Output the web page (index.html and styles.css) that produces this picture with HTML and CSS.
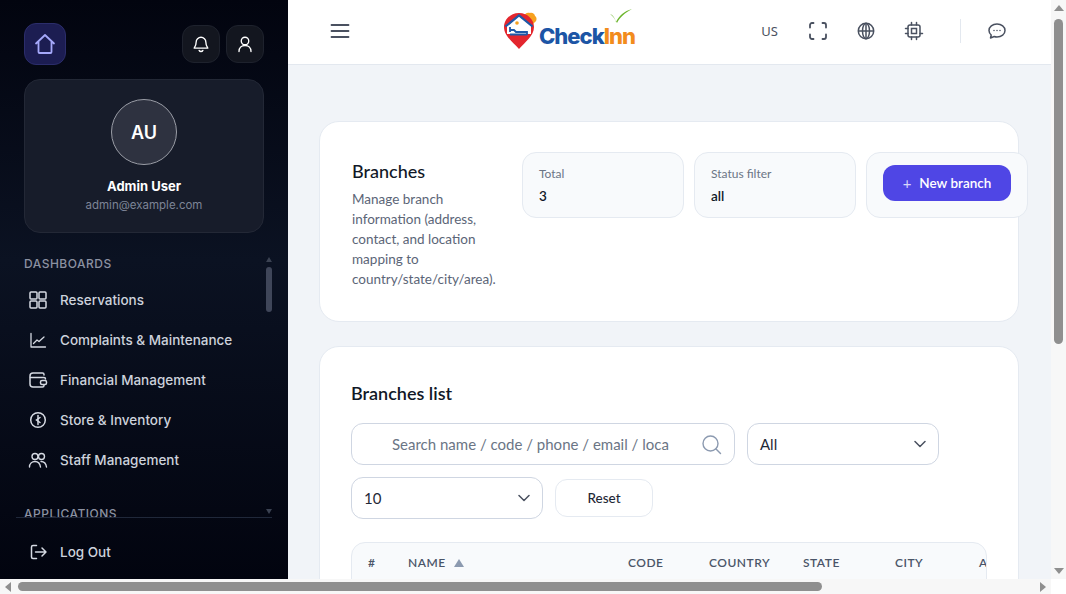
FILE: index.html
```html
<!doctype html>
<html lang="en">
<head>
    <meta charset="UTF-8">
    <title>Branches</title>
    <link rel="stylesheet" href="styles.css">
</head>
<body>
<div class="window">
    <div class="app">
        <aside class="sidebar">
            <div class="side-top">
                <a class="home-btn">
                    <svg width="24" height="24" viewBox="0 0 24 24" fill="none" stroke="#a5a8fa" stroke-width="1.8" stroke-linejoin="round" stroke-linecap="round"><path d="M3 11.5 12 3l9 8.5M5.5 9.5V20a1 1 0 0 0 1 1h11a1 1 0 0 0 1-1V9.5"/></svg>
                </a>
                <div class="side-actions">
                    <a class="icon-btn">
                        <svg width="18" height="18" viewBox="0 0 24 24" fill="none" stroke="#fff" stroke-width="1.8" stroke-linecap="round" stroke-linejoin="round"><path d="M12 3a6.5 6.5 0 0 0-6.5 6.5c0 5-2.5 7-2.5 8h18c0-1-2.500-3-2.500-8A6.500 6.500 0 0 0 12 3Z"/><path d="M9.500 20.500a2.800 2.800 0 0 0 5 0"/></svg>
                    </a>
                    <a class="icon-btn">
                        <svg width="18" height="18" viewBox="0 0 24 24" fill="none" stroke="#fff" stroke-width="1.8" stroke-linecap="round"><circle cx="12" cy="8" r="5"/><path d="M4 22c0-5 3.500-8 8-8s8 3 8 8"/></svg>
                    </a>
                </div>
            </div>
            <div class="profile">
                <div class="avatar">AU</div>
                <div class="profile-name">Admin User</div>
                <div class="profile-mail">admin@example.com</div>
            </div>
            <div class="side-scroll">
                <nav class="side-nav">
                    <div class="nav-title">DASHBOARDS</div>
                    <a class="nav-item">
                        <svg width="20" height="20" viewBox="0 0 20 20" fill="none" stroke="#d5d9e2" stroke-width="1.500"><rect x="2" y="2" width="7" height="7" rx="1"/><rect x="11" y="2" width="7" height="7" rx="1"/><rect x="2" y="11" width="7" height="7" rx="1"/><rect x="11" y="11" width="7" height="7" rx="1"/></svg>
                        Reservations
                    </a>
                    <a class="nav-item">
                        <svg width="20" height="20" viewBox="0 0 20 20" fill="none" stroke="#d5d9e2" stroke-width="1.300" stroke-linecap="round" stroke-linejoin="round"><path d="M3 3.500V17h14.500"/><path d="M5.500 13.500 9 10l2 1.500 5-4.500"/></svg>
                        Complaints &amp; Maintenance
                    </a>
                    <a class="nav-item">
                        <svg width="20" height="20" viewBox="0 0 20 20" fill="none" stroke="#d5d9e2" stroke-width="1.500" stroke-linecap="round" stroke-linejoin="round"><path d="M16 5V4.500A1.500 1.500 0 0 0 14.500 3H5a3 3 0 0 0-3 3v8a3 3 0 0 0 3 3h9.500a1.500 1.500 0 0 0 1.500-1.500V15"/><path d="M2.500 7.500H16a1.500 1.500 0 0 1 1.500 1.500"/><rect x="12.500" y="10.500" width="6" height="4" rx="1.500"/></svg>
                        Financial Management
                    </a>
                    <a class="nav-item">
                        <svg width="20" height="20" viewBox="0 0 20 20" fill="none" stroke="#d5d9e2" stroke-width="1.500" stroke-linecap="round"><circle cx="10" cy="10" r="7.300"/><path d="M10 5.500v9"/><path d="M12 7.500 8.500 10l3.500 2.500"/></svg>
                        Store &amp; Inventory
                    </a>
                    <a class="nav-item">
                        <svg width="20" height="20" viewBox="0 0 20 20" fill="none" stroke="#d5d9e2" stroke-width="1.400" stroke-linecap="round"><circle cx="7" cy="6.500" r="3"/><circle cx="13.500" cy="6.500" r="3"/><path d="M1.500 17c0-3.500 2.500-5.500 5.500-5.500s5 2 5.500 5.500"/><path d="M13 11.500c3 0 5 2 5.500 5.500"/></svg>
                        Staff Management
                    </a>
                    <div class="nav-title nav-title-next">APPLICATIONS</div>
                </nav>
                <div class="mini-bar">
                    <span class="mini-up"></span>
                    <span class="mini-thumb"></span>
                    <span class="mini-down"></span>
                </div>
            </div>
            <div class="side-bottom">
                <a class="nav-item">
                    <svg width="20" height="20" viewBox="0 0 20 20" fill="none" stroke="#d5d9e2" stroke-width="1.500" stroke-linecap="round" stroke-linejoin="round"><path d="M8.500 3.500H5A1.500 1.500 0 0 0 3.500 5v10A1.500 1.500 0 0 0 5 16.500h3.500"/><path d="M7.500 10H18M14 6l4 4-4 4"/></svg>
                    Log Out
                </a>
            </div>
        </aside>

        <div class="main">
            <header class="topbar">
                <a class="burger">
                    <svg width="20" height="16" viewBox="0 0 20 16" fill="none" stroke="#4a5160" stroke-width="1.800" stroke-linecap="round"><path d="M1.500 2h17M1.500 8h17M1.500 14h17"/></svg>
                </a>
                <div class="logo">
                    <svg class="logo-mark" width="36" height="40" viewBox="0 0 36 40">
                        <path d="M22 6c0-3 3-5 6-4 2-1 5 1 5 3 2 1 2 5 0 6l-3 3-8-5Z" fill="#f7a11f"/>
                        <path d="M17 2C8 2 2 9 2 16c0 9 9 15 15 22 6-7 15-13 15-22C32 9 26 2 17 2Z" fill="#e3262e"/>
                        <path d="M5 15 17 5l12 10v8H5Z" fill="#fff"/>
                        <path d="M3.500 15.500 17 4.500l13.500 11" fill="none" stroke="#1e5aa8" stroke-width="2.200"/>
                        <path d="M8 21v-5M8 19h4l2 2h11v3M8 23.500h17" fill="none" stroke="#1e5aa8" stroke-width="1.800"/>
                        <circle cx="15" cy="12" r="1.800" fill="#f7a11f"/>
                    </svg>
                    <span class="logo-check">Check</span><span class="logo-inn">Inn</span>
                    <svg class="logo-tick" width="24" height="15" viewBox="0 0 24 15"><path d="M1 6c3 1 5 4 6 8C10 8 15 3 23 1 16 5 11 9 8 15 6 11 4 8 1 6Z" fill="#6cb52d"/></svg>
                </div>
                <div class="top-tools">
                    <span class="lang">US</span>
                    <a class="tool">
                        <svg width="20" height="20" viewBox="0 0 20 20" fill="none" stroke="#4a5160" stroke-width="1.800" stroke-linecap="round"><path d="M2 6.500V4a2 2 0 0 1 2-2h1.500M14.500 2H16a2 2 0 0 1 2 2v2.500M18 13.500V16a2 2 0 0 1-2 2h-1.500M5.500 18H4a2 2 0 0 1-2-2v-2.500"/></svg>
                    </a>
                    <a class="tool">
                        <svg width="20" height="20" viewBox="0 0 20 20" fill="none" stroke="#4a5160" stroke-width="1.500"><circle cx="10" cy="10" r="7.700"/><ellipse cx="10" cy="10" rx="3.500" ry="7.700"/><path d="M2.300 10h15.400M10 2.300v15.400"/></svg>
                    </a>
                    <a class="tool">
                        <svg width="20" height="20" viewBox="0 0 20 20" fill="none" stroke="#4a5160" stroke-width="1.500" stroke-linecap="round"><rect x="4" y="4" width="12" height="12" rx="2"/><rect x="7.500" y="7.500" width="5" height="5"/><path d="M7.500 1.500V4M12.500 1.500V4M7.500 16v2.500M12.500 16v2.500M1.500 7.500H4M1.500 12.500H4M16 12.500h2.500"/></svg>
                    </a>
                    <span class="top-divider"></span>
                    <a class="tool">
                        <svg width="20" height="20" viewBox="0 0 20 20" fill="none" stroke="#4a5160" stroke-width="1.500" stroke-linecap="round" stroke-linejoin="round"><path d="M10 3c-4.500 0-8 2.800-8 6.500 0 1.800.8 3.300 2.200 4.500L3.500 17l3.700-1.500c.9.300 1.800.5 2.800.5 4.500 0 8-2.800 8-6.500S14.500 3 10 3Z"/><path d="M7 9.500h0M10 9.500h0M13 9.500h0"/></svg>
                    </a>
                </div>
            </header>

            <main class="page">
                <section class="card head-card">
                    <div class="head-text">
                        <h1>Branches</h1>
                        <p>Manage branch information (address, contact, and location mapping to country/state/city/area).</p>
                    </div>
                    <div class="stat">
                        <span class="stat-label">Total</span>
                        <span class="stat-value">3</span>
                    </div>
                    <div class="stat">
                        <span class="stat-label">Status filter</span>
                        <span class="stat-value">all</span>
                    </div>
                    <div class="stat stat-action">
                        <a class="btn-primary"><span class="plus">+</span> New branch</a>
                    </div>
                </section>

                <section class="card list-card">
                    <h2>Branches list</h2>
                    <div class="filters">
                        <div class="field search">
                            <span class="search-text">Search name / code / phone / email / loca</span>
                            <svg width="21" height="21" viewBox="0 0 21 21" fill="none" stroke="#8c9ab0" stroke-width="1.400" stroke-linecap="round"><circle cx="9.500" cy="9.500" r="7.500"/><path d="m15 15 4.500 4.500"/></svg>
                        </div>
                        <div class="field status-select">
                            All
                            <svg width="12" height="8" viewBox="0 0 12 8" fill="none" stroke="#4a5160" stroke-width="1.500" stroke-linecap="round" stroke-linejoin="round"><path d="m1 1.500 5 5 5-5"/></svg>
                        </div>
                        <div class="field size-select">
                            10
                            <svg width="12" height="8" viewBox="0 0 12 8" fill="none" stroke="#4a5160" stroke-width="1.500" stroke-linecap="round" stroke-linejoin="round"><path d="m1 1.500 5 5 5-5"/></svg>
                        </div>
                        <a class="btn-reset">Reset</a>
                    </div>
                    <div class="table-wrap">
                        <div class="table-head">
                            <span class="col-num">#</span>
                            <span class="col-name">NAME <i class="sort"></i></span>
                            <span class="col-code">CODE</span>
                            <span class="col-country">COUNTRY</span>
                            <span class="col-state">STATE</span>
                            <span class="col-city">CITY</span>
                            <span class="col-area">AREA</span>
                        </div>
                    </div>
                </section>
            </main>
        </div>
    </div>

    <div class="vbar">
        <span class="arrow-up"></span>
        <span class="vthumb"></span>
        <span class="arrow-down"></span>
    </div>
    <div class="hbar">
        <span class="arrow-left"></span>
        <span class="hthumb"></span>
        <span class="arrow-right"></span>
    </div>
    <div class="corner"></div>
</div>
</body>
</html>
```

FILE: styles.css
```css
* {
    padding: 0;
    margin: 0;
    box-sizing: border-box;
}

html, body {
    height: 100%;
    overflow: hidden;
}

body {
    font-family: Inter, "Noto Sans", sans-serif;
    color: #111827;
}

.window {
    display: grid;
    grid-template-columns: 1fr 15px;
    grid-template-rows: 1fr 15px;
    width: 1066px;
    height: 594px;
}

.app {
    display: flex;
    min-width: 0;
    min-height: 0;
    overflow: hidden;
}

/* sidebar */
.sidebar {
    display: flex;
    flex-direction: column;
    flex: 0 0 288px;
    padding: 23px 24px 0;
    background: linear-gradient(180deg, #02040f 0%, #0b1222 45%, #02040f 100%);
    color: #d5d9e2;
}

.side-top {
    display: flex;
    justify-content: space-between;
    align-items: center;
}

.home-btn {
    display: flex;
    align-items: center;
    justify-content: center;
    width: 42px;
    height: 42px;
    background: #1c1d52;
    border: 1px solid #2b2d6b;
    border-radius: 12px;
}

.side-actions {
    display: flex;
    gap: 6px;
}

.icon-btn {
    display: flex;
    align-items: center;
    justify-content: center;
    width: 38px;
    height: 38px;
    background: #13161f;
    border: 1px solid #1e222d;
    border-radius: 12px;
}

.profile {
    display: flex;
    flex-direction: column;
    align-items: center;
    height: 154px;
    margin-top: 14px;
    padding-top: 19px;
    background: #171c2a;
    border: 1px solid #232836;
    border-radius: 16px;
}

.avatar {
    display: flex;
    align-items: center;
    justify-content: center;
    width: 66px;
    height: 66px;
    font-size: 18px;
    font-weight: 600;
    color: #fff;
    background: #2e3240;
    border: 1px solid #9a9da6;
    border-radius: 50%;
}

.profile-name {
    margin-top: 12px;
    font-size: 13px;
    font-weight: 700;
    line-height: 18px;
    color: #fff;
}

.profile-mail {
    margin-top: 2px;
    font-size: 11.500px;
    line-height: 16px;
    color: #7d8496;
}

.side-scroll {
    position: relative;
    flex: 1;
    min-height: 0;
    margin: 0 -8px 0 0;
    overflow: hidden;
}

.nav-title {
    margin-top: 23px;
    font-size: 12px;
    font-weight: 500;
    line-height: 16px;
    letter-spacing: 0.5px;
    color: #8b91a1;
}

.nav-title-next {
    margin-top: 26px;
}

.side-nav .nav-item:first-of-type {
    margin-top: 8px;
}

.nav-item {
    display: flex;
    align-items: center;
    gap: 12px;
    height: 40px;
    padding-left: 4px;
    font-size: 13.500px;
    font-weight: 500;
    color: #cdd2dc;
}

.mini-bar {
    position: absolute;
    top: 24px;
    right: 0;
    bottom: 0;
    display: flex;
    flex-direction: column;
    align-items: center;
    width: 6px;
}

.mini-up {
    width: 0;
    height: 0;
    border-left: 3px solid transparent;
    border-right: 3px solid transparent;
    border-bottom: 5px solid #3b4252;
}

.mini-thumb {
    width: 6px;
    height: 45px;
    margin-top: 5px;
    background: #3f4659;
    border-radius: 3px;
}

.mini-down {
    width: 0;
    height: 0;
    margin-top: auto;
    margin-bottom: 3px;
    border-left: 3px solid transparent;
    border-right: 3px solid transparent;
    border-top: 5px solid #3b4252;
}

.side-bottom {
    height: 62px;
    margin: 0 -8px;
    padding: 14px 8px 0;
    border-top: 1px solid #20283a;
}

.side-bottom .nav-item {
    height: 40px;
}

/* topbar */
.main {
    flex: 1;
    min-width: 0;
    display: flex;
    flex-direction: column;
    background: #f1f4f8;
}

.topbar {
    display: flex;
    align-items: center;
    flex: 0 0 65px;
    padding: 0 44px 2px 42px;
    background: #fff;
    border-bottom: 1px solid #e3e8ef;
}

.burger {
    display: flex;
}

.logo {
    position: relative;
    display: flex;
    align-items: flex-end;
    margin-left: 152px;
    font-size: 22px;
    font-weight: 800;
    letter-spacing: -1px;
    line-height: 30px;
}

.logo-mark {
    margin-right: 1px;
}

.logo-check {
    color: #1c55a5;
}

.logo-inn {
    color: #f28c1c;
}

.logo-tick {
    position: absolute;
    top: -3px;
    right: 2px;
}

.top-tools {
    display: flex;
    align-items: center;
    margin-left: auto;
}

.lang {
    margin-right: 30px;
    font-family: "Noto Sans", sans-serif;
    font-size: 13px;
    color: #4a5160;
}

.tool {
    display: flex;
    margin-right: 28px;
}

.top-divider {
    width: 1px;
    height: 24px;
    margin: 0 26px 0 8px;
    background: #e3e8ef;
}

.top-tools .tool:last-child {
    margin-right: 0;
}

/* page */
.page {
    flex: 1;
    min-height: 0;
    padding: 56px 32px 0 31px;
    overflow: hidden;
}

.card {
    background: #fff;
    border: 1px solid #e5eaf1;
    border-radius: 20px;
}

.head-card {
    display: flex;
    align-items: flex-start;
    gap: 10px;
    height: 201px;
    padding: 30px 32px;
    font-family: Lato, sans-serif;
}

.head-text {
    flex: 0 0 160px;
    padding-top: 8px;
}

h1 {
    font-size: 18px;
    font-weight: 500;
    line-height: 22px;
    color: #111827;
}

.head-text p {
    margin-top: 7px;
    font-size: 13.500px;
    line-height: 20px;
    color: #5b6577;
}

.stat {
    display: flex;
    flex-direction: column;
    flex: 0 0 162px;
    height: 66px;
    padding: 13px 16px;
    background: #f8fafc;
    border: 1px solid #e5eaf1;
    border-radius: 14px;
}

.stat-label {
    font-size: 12px;
    line-height: 16px;
    color: #6b7585;
}

.stat-value {
    margin-top: 5px;
    font-size: 13.500px;
    font-weight: 600;
    line-height: 18px;
    color: #111827;
}

.stat-action {
    padding-top: 12px;
}

.btn-primary {
    display: flex;
    align-items: center;
    justify-content: center;
    gap: 8px;
    width: 128px;
    height: 36px;
    font-size: 13.500px;
    font-weight: 600;
    color: #fff;
    background: #4f46e5;
    border-radius: 12px;
}

.plus {
    font-weight: 400;
    font-size: 15px;
    color: #d8d6fb;
}

.list-card {
    height: 300px;
    margin-top: 24px;
    padding: 34px 31px;
    font-family: Lato, sans-serif;
}

h2 {
    font-size: 18px;
    font-weight: 600;
    line-height: 24px;
    color: #111827;
}

.filters {
    display: flex;
    flex-wrap: wrap;
    align-items: center;
    gap: 12px;
    margin-top: 18px;
}

.field {
    display: flex;
    align-items: center;
    justify-content: space-between;
    height: 42px;
    padding: 0 12px;
    font-size: 15px;
    color: #1f2937;
    background: #fff;
    border: 1px solid #cfd6e2;
    border-radius: 12px;
}

.search {
    width: 384px;
    padding-left: 40px;
}

.search-text {
    white-space: nowrap;
    color: #6b7585;
}

.status-select {
    width: 192px;
}

.size-select {
    width: 192px;
}

.btn-reset {
    display: flex;
    align-items: center;
    justify-content: center;
    width: 98px;
    height: 38px;
    font-size: 13.500px;
    font-weight: 500;
    color: #1f2937;
    border: 1px solid #e5eaf1;
    border-radius: 12px;
}

.table-wrap {
    width: 636px;
    margin-top: 23px;
    background: #f8fafc;
    border: 1px solid #e5eaf1;
    border-radius: 14px 14px 0 0;
    overflow: hidden;
}

.table-head {
    display: flex;
    align-items: center;
    height: 38px;
    font-size: 12px;
    font-weight: 600;
    letter-spacing: 0.5px;
    color: #4a5568;
    white-space: nowrap;
}

.col-num { flex: 0 0 56px; padding-left: 16px; }
.col-name { flex: 0 0 220px; }
.col-code { flex: 0 0 81px; }
.col-country { flex: 0 0 94px; }
.col-state { flex: 0 0 92px; }
.col-city { flex: 0 0 84px; }
.col-area { flex: 0 0 50px; }

.sort {
    display: inline-block;
    width: 0;
    height: 0;
    margin-left: 5px;
    border-left: 5px solid transparent;
    border-right: 5px solid transparent;
    border-bottom: 8px solid #8c9ab0;
}

/* window scrollbars */
.vbar {
    display: flex;
    flex-direction: column;
    align-items: center;
    padding: 5px 0;
    background: #f7f7f7;
}

.vthumb {
    width: 9px;
    height: 325px;
    margin-top: 8px;
    background: #8f8f8f;
    border-radius: 5px;
}

.arrow-up {
    width: 0;
    height: 0;
    border-left: 5px solid transparent;
    border-right: 5px solid transparent;
    border-bottom: 6px solid #8f8f8f;
}

.arrow-down {
    width: 0;
    height: 0;
    margin-top: auto;
    border-left: 5px solid transparent;
    border-right: 5px solid transparent;
    border-top: 6px solid #8f8f8f;
}

.hbar {
    display: flex;
    align-items: center;
    padding: 0 5px;
    background: #f7f7f7;
}

.hthumb {
    width: 804px;
    height: 9px;
    margin-left: 7px;
    background: #8f8f8f;
    border-radius: 5px;
}

.arrow-left {
    width: 0;
    height: 0;
    border-top: 5px solid transparent;
    border-bottom: 5px solid transparent;
    border-right: 6px solid #8f8f8f;
}

.arrow-right {
    width: 0;
    height: 0;
    margin-left: auto;
    border-top: 5px solid transparent;
    border-bottom: 5px solid transparent;
    border-left: 6px solid #8f8f8f;
}

.corner {
    background: #fff;
}
```
